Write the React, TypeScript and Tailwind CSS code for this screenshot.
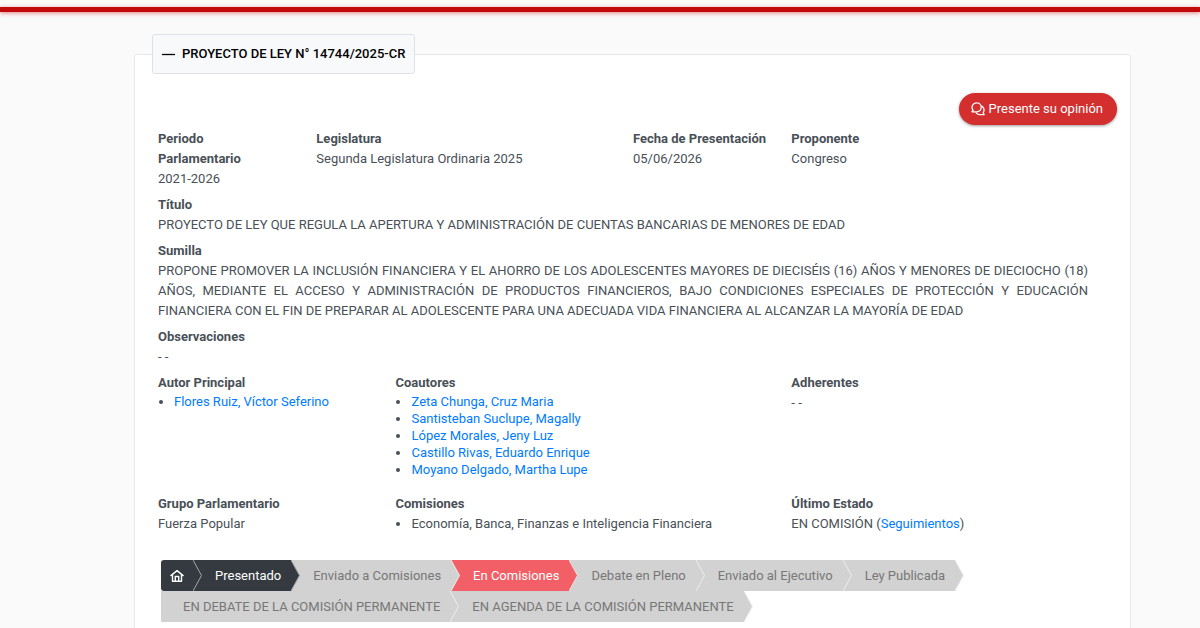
import { useState } from 'react'
import type { ReactNode } from 'react'
import clsx from 'clsx'

type EstadoPaso = 'completado' | 'actual' | 'pendiente'

interface Paso {
  nombre: string
  estado: EstadoPaso
}

const coautores = [
  'Zeta Chunga, Cruz Maria',
  'Santisteban Suclupe, Magally',
  'López Morales, Jeny Luz',
  'Castillo Rivas, Eduardo Enrique',
  'Moyano Delgado, Martha Lupe'
]

const pasos: Paso[] = [
  { nombre: 'Inicio', estado: 'completado' },
  { nombre: 'Presentado', estado: 'completado' },
  { nombre: 'Enviado a Comisiones', estado: 'pendiente' },
  { nombre: 'En Comisiones', estado: 'actual' },
  { nombre: 'Debate en Pleno', estado: 'pendiente' },
  { nombre: 'Enviado al Ejecutivo', estado: 'pendiente' },
  { nombre: 'Ley Publicada', estado: 'pendiente' },
  { nombre: 'EN DEBATE DE LA COMISIÓN PERMANENTE', estado: 'pendiente' },
  { nombre: 'EN AGENDA DE LA COMISIÓN PERMANENTE', estado: 'pendiente' }
]

const estilosPaso: Record<EstadoPaso, string> = {
  completado: 'bg-[#343a40] text-white',
  actual: 'bg-[#f35f66] text-white',
  pendiente: 'bg-[#d2d2d2] text-[#777777]'
}

const estilosFlecha: Record<EstadoPaso, string> = {
  completado: 'fill-[#343a40] stroke-[#a5a8ab]',
  actual: 'fill-[#f35f66] stroke-[#e4e4e4]',
  pendiente: 'fill-[#d2d2d2] stroke-[#eeeeee]'
}

function HomeIcon() {
  return (
    <svg viewBox="0 0 14 14" className="h-3.5 w-3.5" fill="none" stroke="currentColor" strokeWidth="1.4" strokeLinecap="round" strokeLinejoin="round" aria-hidden="true">
      <path d="M0.9 6.6 7 1.6l6.1 5" />
      <path d="M2.5 5.6v6.7h9V5.6" />
      <path d="M5.3 12.2V7.5h3.4v4.7" />
    </svg>
  )
}

function CommentsIcon() {
  return (
    <svg viewBox="0 0 14 14" className="h-3.5 w-3.5" fill="none" stroke="currentColor" strokeWidth="1.3" strokeLinecap="round" strokeLinejoin="round" aria-hidden="true">
      <path d="M5.8 0.9a4.4 4.4 0 0 1 0 8.9H0.9l1.2-1.7A4.4 4.4 0 0 1 5.8 0.9Z" />
      <path d="M10.8 4.1a4.6 4.6 0 0 1 1.4 6.6l1 2H8.9a4.6 4.6 0 0 1-3.7-1.9" />
    </svg>
  )
}

function Campo({ label, className, children }: { label: string; className: string; children: ReactNode }) {
  return (
    <div className={clsx('px-[10px]', className)}>
      <dt className="font-bold">{label}</dt>
      <dd>{children}</dd>
    </div>
  )
}

export default function App() {
  const [abierto, setAbierto] = useState(true)

  return (
    <div className="min-h-screen bg-[#fafafa] pt-[7px] font-['Roboto','Open_Sans',sans-serif] text-[13px] leading-5 text-[#495057]">
      {/* Franja superior */}
      <div className="h-[5px] bg-[#c20a0a] shadow-[0_1px_4px_rgba(194,10,10,0.5)]" />

      <main className="pt-[22px] pr-[69px] pl-[134px]">
        <fieldset className="rounded-[3px] border border-[#e4e8eb] bg-white px-[13px] pb-4">
          <legend className="ml-1 rounded-[3px] border border-[#dee2e6] bg-[#f8f9fa]">
            <button
              type="button"
              aria-expanded={abierto}
              onClick={() => setAbierto(!abierto)}
              className="flex items-center gap-[7px] px-[9px] py-[9px] font-medium text-black"
            >
              <svg viewBox="0 0 13 13" className="w-[13px]" stroke="currentColor" strokeWidth="1.3" aria-hidden="true">
                <path d={abierto ? 'M0 6.5h13' : 'M0 6.5h13M6.5 0v13'} />
              </svg>
              PROYECTO DE LEY N° 14744/2025-CR
            </button>
          </legend>

          {abierto && (
            <>
              <div className="mt-[19px] flex justify-end">
                <button
                  type="button"
                  className="flex h-8 items-center gap-1 rounded-full bg-[#d32f2f] pr-3.5 pl-3 text-white shadow-[0_1px_3px_rgba(0,0,0,0.4)]"
                >
                  <CommentsIcon />
                  Presente su opinión
                </button>
              </div>

              {/* Datos del proyecto */}
              <dl className="mt-1 mr-[19px] grid grid-cols-12 gap-y-[6px]">
                <Campo label="Periodo Parlamentario" className="col-span-2 pr-6">2021-2026</Campo>
                <Campo label="Legislatura" className="col-span-4">Segunda Legislatura Ordinaria 2025</Campo>
                <Campo label="Fecha de Presentación" className="col-span-2 whitespace-nowrap">05/06/2026</Campo>
                <Campo label="Proponente" className="col-span-4">Congreso</Campo>
                <Campo label="Título" className="col-span-12">
                  PROYECTO DE LEY QUE REGULA LA APERTURA Y ADMINISTRACIÓN DE CUENTAS BANCARIAS DE MENORES DE EDAD
                </Campo>
                <Campo label="Sumilla" className="col-span-12 text-justify">
                  PROPONE PROMOVER LA INCLUSIÓN FINANCIERA Y EL AHORRO DE LOS ADOLESCENTES MAYORES DE DIECISÉIS (16) AÑOS Y
                  MENORES DE DIECIOCHO (18) AÑOS, MEDIANTE EL ACCESO Y ADMINISTRACIÓN DE PRODUCTOS FINANCIEROS, BAJO
                  CONDICIONES ESPECIALES DE PROTECCIÓN Y EDUCACIÓN FINANCIERA CON EL FIN DE PREPARAR AL ADOLESCENTE PARA
                  UNA ADECUADA VIDA FINANCIERA AL ALCANZAR LA MAYORÍA DE EDAD
                </Campo>
                <Campo label="Observaciones" className="col-span-12">- -</Campo>
                <Campo label="Autor Principal" className="col-span-3">
                  <ul className="list-disc pl-4 leading-[17px]">
                    <li><a href="#autor" className="text-[#007bff]">Flores Ruiz, Víctor Seferino</a></li>
                  </ul>
                </Campo>
                <Campo label="Coautores" className="col-span-5">
                  <ul className="mb-2.5 list-disc pl-4 leading-[17px]">
                    {coautores.map((coautor) => (
                      <li key={coautor}><a href="#coautor" className="text-[#007bff]">{coautor}</a></li>
                    ))}
                  </ul>
                </Campo>
                <Campo label="Adherentes" className="col-span-4">- -</Campo>
                <Campo label="Grupo Parlamentario" className="col-span-3">Fuerza Popular</Campo>
                <Campo label="Comisiones" className="col-span-5">
                  <ul className="list-disc pl-4">
                    <li>Economía, Banca, Finanzas e Inteligencia Financiera</li>
                  </ul>
                </Campo>
                <Campo label="Último Estado" className="col-span-4">
                  EN COMISIÓN (<a href="#seguimientos" className="text-[#007bff]">Seguimientos</a>)
                </Campo>
              </dl>

              {/* Etapas */}
              <ol className="mt-[26px] ml-[13px] flex flex-wrap">
                {pasos.map((paso, index) => (
                  <li
                    key={paso.nombre}
                    className={clsx(
                      'relative flex h-[31px] items-center',
                      index === 0 ? 'rounded-l-[3px] px-[9px]' : 'pr-2.5 pl-[22px]',
                      estilosPaso[paso.estado]
                    )}
                  >
                    {index === 0 ? <HomeIcon /> : paso.nombre}
                    <svg
                      viewBox="0 0 9 31"
                      className={clsx('absolute top-0 left-full z-10 h-[31px] w-[9px]', estilosFlecha[paso.estado])}
                      aria-hidden="true"
                    >
                      <path d="M0 0 8.5 15.5 0 31" />
                    </svg>
                  </li>
                ))}
              </ol>
            </>
          )}
        </fieldset>
      </main>
    </div>
  )
}
